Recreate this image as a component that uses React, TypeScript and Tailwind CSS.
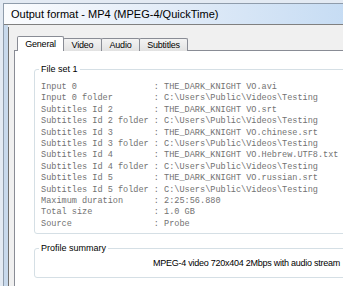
const lines: [string, string][] = [
  ['Input 0', 'THE_DARK_KNIGHT VO.avi'],
  ['Input 0 folder', 'C:\\Users\\Public\\Videos\\Testing'],
  ['Subtitles Id 2', 'THE_DARK_KNIGHT VO.srt'],
  ['Subtitles Id 2 folder', 'C:\\Users\\Public\\Videos\\Testing'],
  ['Subtitles Id 3', 'THE_DARK_KNIGHT VO.chinese.srt'],
  ['Subtitles Id 3 folder', 'C:\\Users\\Public\\Videos\\Testing'],
  ['Subtitles Id 4', 'THE_DARK_KNIGHT VO.Hebrew.UTF8.txt'],
  ['Subtitles Id 4 folder', 'C:\\Users\\Public\\Videos\\Testing'],
  ['Subtitles Id 5', 'THE_DARK_KNIGHT VO.russian.srt'],
  ['Subtitles Id 5 folder', 'C:\\Users\\Public\\Videos\\Testing'],
  ['Maximum duration', '2:25:56.880'],
  ['Total size', '1.0 GB'],
  ['Source', 'Probe'],
]

const tabs = [
  { label: 'General', w: 'w-[47px]' },
  { label: 'Video', w: 'w-[39px]' },
  { label: 'Audio', w: 'w-[39px]' },
  { label: 'Subtitles', w: 'w-[49px]' },
]

const ui = { fontFamily: '"Liberation Sans", Arial, sans-serif' }

export default function App() {
  const text = lines.map(([k, v]) => `${k.padEnd(22, ' ')}: ${v}`).join('\n')

  return (
    <div className="w-[343px] h-[286px] overflow-hidden bg-[#e3eaf3] pl-[3px] pt-[3px]" style={ui}>
      <div className="h-[300px] w-[400px] border-l border-t border-[#8f9cab] bg-[#f0f0f0] flex flex-col">
        {/* Title strip */}
        <div className="h-[21px] shrink-0 border-b border-[#808080] bg-gradient-to-r from-[#fbfcfe] via-[#dde9f7] to-[#bdd7f2] pl-[7px] text-[11px] leading-[20px] text-black whitespace-nowrap">
          Output format - MP4 (MPEG-4/QuickTime)
        </div>

        <div className="flex flex-1">
          {/* left frame */}
          <div className="w-[4px] bg-[#c8d9ec]" />
          <div className="w-[1px] mt-[2px] bg-[#6f6f6f]" />

          {/* tab control */}
          <div className="flex-1 pl-[5px] pt-[11px]">
            <div className="flex items-end h-[15px] pl-[3px] text-[9px] tracking-[-0.2px] text-black">
              {tabs.map((t, i) =>
                i === 0 ? (
                  <div
                    key={t.label}
                    className={`relative z-10 h-[15px] ${t.w} border border-b-0 border-[#898c95] bg-white rounded-t-[2px] text-center leading-[14px]`}
                  >
                    {t.label}
                  </div>
                ) : (
                  <div
                    key={t.label}
                    className={`h-[13px] -ml-[1px] ${t.w} border border-b-0 border-[#898c95] bg-gradient-to-b from-[#f3f3f3] to-[#e2e2e2] rounded-t-[2px] text-center leading-[12px]`}
                  >
                    {t.label}
                  </div>
                ),
              )}
            </div>

            <div className="-mt-[1px] h-[260px] border border-[#898c95] bg-white pl-[19px] pt-[18px]">
              {/* File set 1 */}
              <div className="relative w-[340px] h-[165px] rounded-[3px] border border-[#d5dfe5] pl-[6px] pt-[12px]">
                <span className="absolute -top-[8px] left-[4px] bg-white px-[2px] text-[9px] leading-[14px] text-black">
                  File set 1
                </span>
                <pre
                  className="m-0 text-[8.55px] leading-[11.4px] text-[#727272]"
                  style={{ fontFamily: '"Liberation Mono", "Courier New", monospace' }}
                >
                  {text}
                </pre>
              </div>

              {/* Profile summary */}
              <div className="relative mt-[14px] w-[340px] h-[30px] rounded-[3px] border border-[#d5dfe5] pl-[118px] pt-[7px]">
                <span className="absolute -top-[8px] left-[4px] bg-white px-[2px] text-[9px] leading-[14px] text-black">
                  Profile summary
                </span>
                <div className="text-[9px] tracking-[-0.25px] leading-[14px] text-black whitespace-nowrap">
                  MPEG-4 video 720x404 2Mbps with audio stream
                </div>
              </div>
            </div>
          </div>
        </div>
      </div>
    </div>
  )
}
